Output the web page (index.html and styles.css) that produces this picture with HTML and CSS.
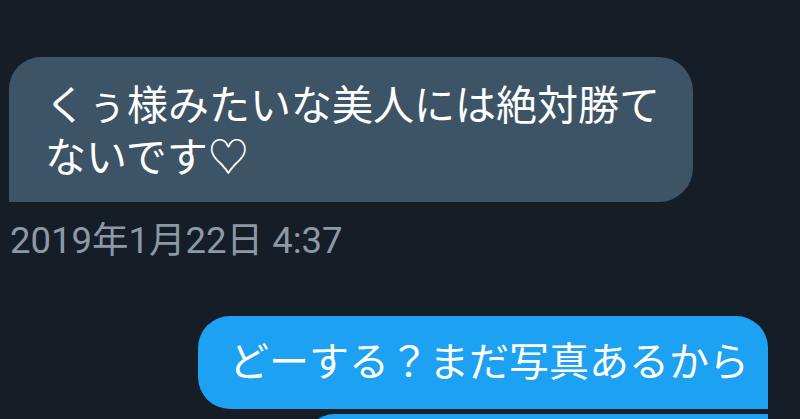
FILE: index.html
```html
<!DOCTYPE html>
<html lang="ja">
<head>
<meta charset="utf-8">
<link rel="stylesheet" href="styles.css">
</head>
<body>
<div class="chat">
  <div class="msg recv">
    <div class="bubble recv-bubble">くぅ様みたいな美人には絶対勝て<br>ないです♡</div>
    <div class="time">2019年1月22日 4:37</div>
  </div>
  <div class="msg sent">
    <div class="bubble sent-bubble">どーする？まだ写真あるから</div>
    <div class="bubble sent-bubble next">&nbsp;</div>
  </div>
</div>
</body>
</html>
```

FILE: styles.css
```css
html, body {
  margin: 0;
  padding: 0;
  background: #151d27;
  overflow: hidden;
  height: 419px;
}
.chat {
  padding: 57px 32px 0 9px;
  display: flex;
  flex-direction: column;
  font-family: Roboto, "Noto Sans CJK JP", sans-serif;
}
.msg {
  display: flex;
  flex-direction: column;
}
.recv { align-items: flex-start; }
.sent { align-items: flex-end; margin-top: 55px; }
.bubble {
  color: #ffffff;
  font-size: 41px;
  line-height: 52px;
  white-space: nowrap;
}
.recv-bubble {
  background: #3d5466;
  border-radius: 32px 34px 34px 0;
  padding: 23px 33px 18px 36px;
}
.time {
  margin-top: 19px;
  margin-left: 1px;
  color: #8b99a6;
  font-size: 36.5px;
  line-height: 40px;
}
.sent-bubble {
  background: #1da1f2;
  border-radius: 32px 32px 0 32px;
  padding: 21px 19px 20px 31px;
  font-size: 40px;
}
.next {
  margin-top: 5px;
  width: 415px;
  border-radius: 32px 0 0 0;
}
```
